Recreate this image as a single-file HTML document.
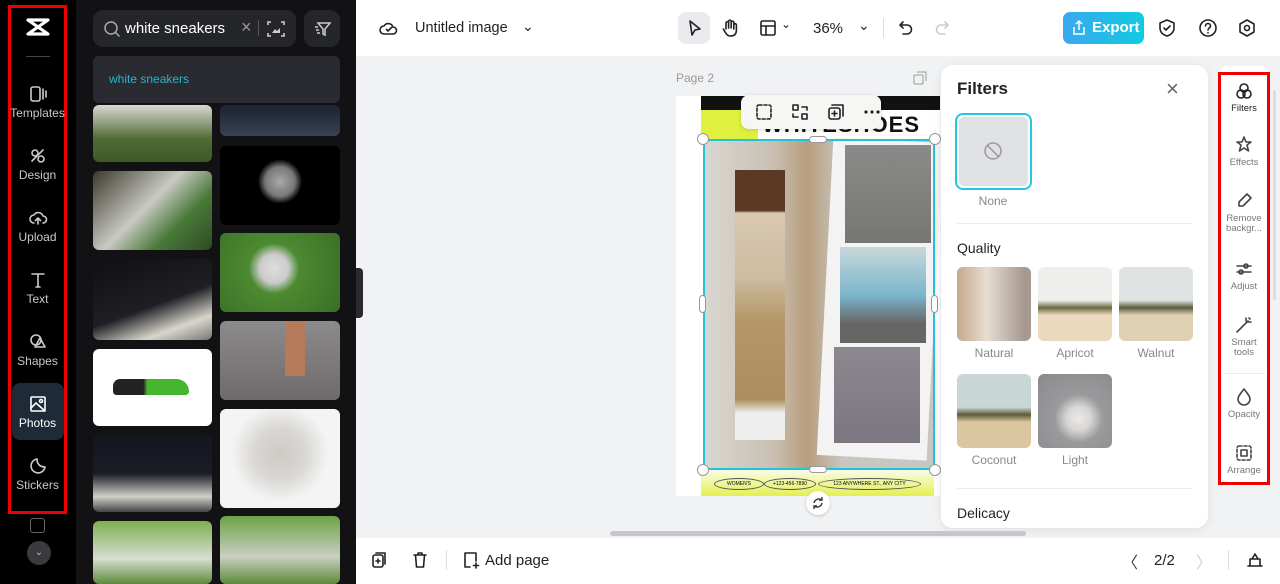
<!DOCTYPE html>
<html><head><meta charset="utf-8"><style>
*{box-sizing:border-box;margin:0;padding:0}
body{width:1280px;height:584px;overflow:hidden;font-family:"Liberation Sans",sans-serif;background:#f1f2f4;position:relative}
.a{position:absolute}
.rail{left:0;top:0;width:76px;height:584px;background:#000}
.ri{position:absolute;left:8px;width:59px;text-align:center;color:#c8c8cc;font-size:12px}
.ri svg{display:block;margin:0 auto 2px}
.panel{left:76px;top:0;width:280px;height:584px;background:#121214}
.ph{position:absolute;border-radius:6px}
.top{left:356px;top:0;width:924px;height:56px;background:#fff}
.bot{left:356px;top:538px;width:924px;height:46px;background:#fff}
.ic{stroke:#222;fill:none;stroke-width:1.6;stroke-linecap:round;stroke-linejoin:round}
.fp{left:941px;top:65px;width:267px;height:463px;background:#fff;border-radius:12px;box-shadow:0 2px 10px rgba(0,0,0,.08)}
.th{position:absolute;width:74px;height:74px;border-radius:6px}
.tl{position:absolute;width:74px;text-align:center;font-size:12px;color:#888}
.rr{left:1218px;top:72px;width:52px;height:413px;background:#fff;border:3px solid #e00}
.rt{position:absolute;left:0;width:46px;text-align:center;font-size:9.5px;color:#777;line-height:10px}
.rt svg{display:block;margin:0 auto 3px}
</style></head><body>
<div class="a rail"></div>
<div class="a" style="left:8px;top:5px;width:59px;height:509px;border:3px solid #e00"></div>
<svg class="a" style="left:25px;top:16px" width="26" height="22" viewBox="0 0 26 22"><path d="M3 4h20L3 18h20z" stroke="#fff" stroke-width="3.2" fill="none" stroke-linejoin="round"/></svg>
<div class="a" style="left:26px;top:56px;width:24px;height:1px;background:#444"></div>
<div class="ri" style="top:84px"><svg width="20" height="20" class="ic" style="stroke:#ccc"><rect x="3" y="3" width="9" height="14" rx="2"/><path d="M15 5v10M18 7v6"/></svg>Templates</div>
<div class="ri" style="top:146px"><svg width="20" height="20" class="ic" style="stroke:#ccc"><circle cx="7" cy="7" r="3"/><circle cx="13" cy="13" r="3"/><path d="M4 15L15 4"/></svg>Design</div>
<div class="ri" style="top:208px"><svg width="20" height="20" class="ic" style="stroke:#ccc"><path d="M6 15a4 4 0 010-8 5 5 0 019 1 3.5 3.5 0 010 7M10 16v-6M7.5 12.5L10 10l2.5 2.5"/></svg>Upload</div>
<div class="ri" style="top:270px"><svg width="20" height="20" class="ic" style="stroke:#ccc"><path d="M4 4h12M10 4v13M8 17h4"/></svg>Text</div>
<div class="ri" style="top:332px"><svg width="20" height="20" class="ic" style="stroke:#ccc"><circle cx="8" cy="8" r="5"/><path d="M12 6l5 9h-10z"/></svg>Shapes</div>
<div class="a" style="left:12px;top:383px;width:52px;height:57px;background:#1f2a38;border-radius:8px"></div>
<div class="ri" style="top:394px;color:#fff"><svg width="20" height="20" class="ic" style="stroke:#fff"><rect x="3" y="3" width="14" height="14" rx="1"/><path d="M3 14l5-5 9 8"/><circle cx="13" cy="7" r="1.5"/></svg>Photos</div>
<div class="ri" style="top:456px"><svg width="20" height="20" class="ic" style="stroke:#ccc"><path d="M17 11A7 7 0 119 3c0 5 3 8 8 8z"/></svg>Stickers</div>
<div class="a" style="left:30px;top:518px;width:15px;height:15px;border:1.5px solid #666;border-radius:3px"></div>
<div class="a" style="left:27px;top:541px;width:24px;height:24px;border-radius:50%;background:#3a3a3e;color:#bbb;font-size:10px;text-align:center;line-height:24px">⌄</div>

<div class="a panel"></div>
<div class="a" style="left:93px;top:10px;width:203px;height:37px;background:#25262a;border-radius:10px"></div>
<svg class="a" style="left:103px;top:20px" width="18" height="18"><circle cx="8" cy="8" r="6" stroke="#aaa" stroke-width="1.5" fill="none"/><path d="M12.5 12.5l4 4" stroke="#aaa" stroke-width="1.5"/></svg>
<div class="a" style="left:125px;top:20px;color:#fff;font-size:15px">white sneakers</div>
<div class="a" style="left:241px;top:17px;color:#999;font-size:18px">×</div>
<div class="a" style="left:258px;top:20px;width:1px;height:16px;background:#555"></div>
<svg class="a" style="left:266px;top:19px" width="20" height="20"><path d="M2 6V3h3M15 3h3v3M18 14v3h-3M5 17H2v-3" stroke="#ccc" stroke-width="1.6" fill="none"/><path d="M6 14l3-4 2 2 3-3v5z" fill="#ccc"/></svg>
<div class="a" style="left:304px;top:10px;width:36px;height:37px;background:#25262a;border-radius:10px"></div>
<svg class="a" style="left:313px;top:19px" width="20" height="20"><path d="M5 4h12l-5 6v6l-2-1v-5z M2 8h3M3 11h3M4 14h3" stroke="#ccc" stroke-width="1.5" fill="none"/></svg>
<div class="a" style="left:93px;top:56px;width:247px;height:47px;background:#2a2b30;border-radius:6px"></div>
<div class="a" style="left:109px;top:72px;color:#1fb8d0;font-size:12px">white sneakers</div>
<div class="ph" style="left:93px;top:105px;width:119px;height:57px;background:linear-gradient(#d8d8d4,#4f6a33 60%,#3d5a28)"></div>
<div class="ph" style="left:93px;top:171px;width:119px;height:79px;background:linear-gradient(135deg,#3b3a2c,#c9c9c4 45%,#4b7a3a 70%,#2f4a24)"></div>
<div class="ph" style="left:93px;top:259px;width:119px;height:81px;background:linear-gradient(160deg,#101012,#1e1f24 55%,#d8d6cc 80%,#777)"></div>
<div class="ph" style="left:93px;top:349px;width:119px;height:77px;background:#fff"><div style="position:absolute;left:20px;top:30px;width:76px;height:16px;background:linear-gradient(90deg,#222 40%,#46b530 45%);border-radius:8px 14px 4px 4px"></div></div>
<div class="ph" style="left:93px;top:435px;width:119px;height:77px;background:linear-gradient(#14161e,#1a1c26 50%,#d0cfc8 80%,#444)"></div>
<div class="ph" style="left:93px;top:521px;width:119px;height:63px;background:linear-gradient(#7fae52,#d7ded0 60%,#5e8a3a)"></div>
<div class="ph" style="left:220px;top:105px;width:120px;height:31px;background:linear-gradient(#1a2233,#3a4350)"></div>
<div class="ph" style="left:220px;top:146px;width:120px;height:79px;background:radial-gradient(circle at 50% 45%,#aaa 0,#777 20%,#000 30%)"></div>
<div class="ph" style="left:220px;top:233px;width:120px;height:79px;background:radial-gradient(circle at 45% 45%,#ddd 0,#ccc 18%,#4c8a30 32%,#3a6e28)"></div>
<div class="ph" style="left:220px;top:321px;width:120px;height:79px;background:linear-gradient(#8c8a8a,#6d6b6c)"><div style="position:absolute;left:65px;top:0;width:20px;height:55px;background:#b47a5a"></div></div>
<div class="ph" style="left:220px;top:409px;width:120px;height:99px;background:radial-gradient(circle at 50% 45%,#cfcac4 0,#d8d6d3 30%,#f4f4f4 60%)"></div>
<div class="ph" style="left:220px;top:516px;width:120px;height:68px;background:linear-gradient(#6ea247,#c9cfc2 60%,#5c8a39)"></div>
<div class="a" style="left:356px;top:268px;width:7px;height:50px;background:#2a2a2e;border-radius:0 4px 4px 0"></div>

<div class="a top"></div>
<svg class="a" style="left:378px;top:18px" width="22" height="20"><path d="M6 16a4 4 0 010-8 5 5 0 019 1 3.5 3.5 0 010 7z M8 11l2 2 4-4" stroke="#222" stroke-width="1.6" fill="none"/></svg>
<div class="a" style="left:415px;top:20px;font-size:14.5px;color:#222">Untitled image</div>
<div class="a" style="left:522px;top:18px;font-size:14px;color:#222">⌄</div>
<div class="a" style="left:678px;top:12px;width:32px;height:32px;background:#e9ebef;border-radius:8px"></div>
<svg class="a" style="left:684px;top:18px" width="20" height="20"><path d="M6 3l10 8-5 1-3 5z" class="ic"/></svg>
<svg class="a" style="left:720px;top:18px" width="20" height="20"><path d="M6 11V5a1.3 1.3 0 012.6 0v5V3.5a1.3 1.3 0 012.6 0V10V4.5a1.3 1.3 0 012.6 0V11V7a1.3 1.3 0 012.6 0v5c0 4-2 6-6 6-3 0-4-2-6-5l-1-2" class="ic"/></svg>
<svg class="a" style="left:758px;top:18px" width="20" height="20"><rect x="3" y="3" width="14" height="14" rx="1.5" class="ic"/><path d="M3 8h14M8 8v9" class="ic"/></svg>
<div class="a" style="left:781px;top:17px;font-size:12px;color:#222">⌄</div>
<div class="a" style="left:813px;top:20px;font-size:15px;color:#222">36%</div>
<div class="a" style="left:858px;top:17px;font-size:14px;color:#222">⌄</div>
<div class="a" style="left:883px;top:18px;width:1px;height:20px;background:#ddd"></div>
<svg class="a" style="left:896px;top:18px" width="20" height="20"><path d="M7 4L4 7l3 3M4 7h7a4.5 4.5 0 010 9H7" class="ic"/></svg>
<svg class="a" style="left:932px;top:18px" width="20" height="20"><path d="M13 4l3 3-3 3M16 7H9a4.5 4.5 0 000 9h4" class="ic" style="stroke:#ccc"/></svg>
<div class="a" style="left:1063px;top:12px;width:81px;height:32px;border-radius:7px;background:linear-gradient(90deg,#3aa8f0,#10cbe0);color:#fff;font-size:15px;font-weight:bold;line-height:32px;padding-left:29px">Export</div>
<svg class="a" style="left:1071px;top:19px" width="16" height="18"><path d="M8 11V2M5 5l3-3 3 3M3 8v7h10V8" stroke="#fff" stroke-width="1.5" fill="none"/></svg>
<svg class="a" style="left:1157px;top:18px" width="20" height="20"><path d="M10 2l7 3v5c0 4-3 7-7 8-4-1-7-4-7-8V5z M7 10l2 2 4-4" class="ic"/></svg>
<svg class="a" style="left:1198px;top:18px" width="20" height="20"><circle cx="10" cy="10" r="8" class="ic"/><path d="M7.5 8a2.5 2.5 0 115 0c0 2-2.5 2-2.5 4M10 14.5v.5" class="ic"/></svg>
<svg class="a" style="left:1237px;top:18px" width="20" height="20"><path d="M10 2l7 4v8l-7 4-7-4V6z" class="ic"/><circle cx="10" cy="10" r="2.5" class="ic"/></svg>

<div class="a" style="left:676px;top:71px;font-size:12px;color:#999">Page 2</div>
<svg class="a" style="left:913px;top:71px" width="14" height="14"><rect x="1" y="4" width="9" height="9" rx="1" stroke="#999" fill="none"/><path d="M4 1h9v9" stroke="#999" fill="none"/></svg>
<div class="a" style="left:676px;top:96px;width:264px;height:400px;background:#fff"></div>
<div class="a" style="left:701px;top:96px;width:239px;height:14px;background:#111"></div>
<div class="a" style="left:701px;top:110px;width:57px;height:30px;background:#dff03e"></div>
<div class="a" style="left:758px;top:110px;width:182px;height:30px;color:#111;font-size:22px;font-weight:bold;line-height:30px;text-align:right;padding-right:20px;letter-spacing:1px">WHITESHOES</div>
<div class="a" style="left:704px;top:140px;width:230px;height:330px;background:linear-gradient(90deg,#d9d7d2,#c9c0b3 30%,#b89e7c 45%,#c8c6c0 60%)"></div>
<div class="a" style="left:735px;top:170px;width:50px;height:270px;background:linear-gradient(#5a3a25 0,#5a3a25 15%,#d8c8b0 16%,#cdbca0 40%,#b59868 55%,#ac8e5e 85%,#eee 90%)"></div>
<div class="a" style="left:825px;top:140px;width:110px;height:318px;background:#f3f3f3;transform:rotate(3deg)"></div>
<div class="a" style="left:845px;top:145px;width:86px;height:98px;background:linear-gradient(#8a8a88,#767674)"></div>
<div class="a" style="left:840px;top:247px;width:86px;height:96px;background:linear-gradient(#c8d8da 0,#7ab6cc 50%,#666 80%)"></div>
<div class="a" style="left:834px;top:347px;width:86px;height:96px;background:linear-gradient(#8d8790,#7c7680)"></div>
<div class="a" style="left:701px;top:470px;width:233px;height:26px;background:linear-gradient(#fafce8,#e4f050)"></div>
<div class="a" style="left:714px;top:478px;width:50px;height:12px;border:1px solid #555;border-radius:50%;font-size:5px;text-align:center;line-height:10px">WOMEN'S</div>
<div class="a" style="left:764px;top:478px;width:52px;height:12px;border:1px solid #555;border-radius:50%;font-size:5px;text-align:center;line-height:10px">+123-456-7890</div>
<div class="a" style="left:818px;top:478px;width:103px;height:12px;border:1px solid #555;border-radius:50%;font-size:5px;text-align:center;line-height:10px">123 ANYWHERE ST., ANY CITY</div>
<div class="a" style="left:703px;top:139px;width:232px;height:331px;border:2px solid #22c2d8"></div>
<div class="a" style="left:697px;top:133px;width:12px;height:12px;border-radius:50%;background:#fff;border:1px solid #999"></div>
<div class="a" style="left:929px;top:133px;width:12px;height:12px;border-radius:50%;background:#fff;border:1px solid #999"></div>
<div class="a" style="left:697px;top:464px;width:12px;height:12px;border-radius:50%;background:#fff;border:1px solid #999"></div>
<div class="a" style="left:929px;top:464px;width:12px;height:12px;border-radius:50%;background:#fff;border:1px solid #999"></div>
<div class="a" style="left:809px;top:136px;width:18px;height:7px;border-radius:4px;background:#fff;border:1px solid #999"></div>
<div class="a" style="left:809px;top:466px;width:18px;height:7px;border-radius:4px;background:#fff;border:1px solid #999"></div>
<div class="a" style="left:699px;top:295px;width:7px;height:18px;border-radius:4px;background:#fff;border:1px solid #999"></div>
<div class="a" style="left:931px;top:295px;width:7px;height:18px;border-radius:4px;background:#fff;border:1px solid #999"></div>
<div class="a" style="left:741px;top:95px;width:140px;height:34px;background:#f6f6f4;border-radius:8px;box-shadow:0 1px 4px rgba(0,0,0,.15)"></div>
<svg class="a" style="left:755px;top:103px" width="18" height="18"><rect x="2" y="2" width="14" height="14" rx="2" class="ic" stroke-dasharray="3 2"/></svg>
<svg class="a" style="left:791px;top:103px" width="18" height="18"><rect x="2" y="2" width="5" height="5" class="ic"/><rect x="11" y="11" width="5" height="5" class="ic"/><path d="M11 4h5v3M7 14H2v-3" class="ic"/></svg>
<svg class="a" style="left:827px;top:103px" width="18" height="18"><rect x="2" y="5" width="11" height="11" rx="2" class="ic"/><path d="M5 2h11v11M7.5 8v5M5 10.5h5" class="ic"/></svg>
<svg class="a" style="left:862px;top:103px" width="20" height="18"><circle cx="4" cy="9" r="1.6" fill="#222"/><circle cx="10" cy="9" r="1.6" fill="#222"/><circle cx="16" cy="9" r="1.6" fill="#222"/></svg>
<div class="a" style="left:806px;top:491px;width:24px;height:24px;border-radius:50%;background:#fff;box-shadow:0 1px 3px rgba(0,0,0,.2)"></div>
<svg class="a" style="left:811px;top:496px" width="14" height="14"><path d="M11 4a5 5 0 00-8 3M3 10a5 5 0 008-3M11 1v3H8M3 13v-3h3" stroke="#333" stroke-width="1.4" fill="none"/></svg>

<div class="a fp"></div>
<div class="a" style="left:957px;top:79px;font-size:17px;font-weight:bold;color:#222">Filters</div>
<div class="a" style="left:1166px;top:76px;font-size:22px;color:#666">×</div>
<div class="a" style="left:955px;top:113px;width:77px;height:77px;border:2px solid #22c8e0;border-radius:8px;padding:2px"><div style="width:100%;height:100%;background:#dfe1e5;border-radius:5px"></div></div>
<svg class="a" style="left:983px;top:141px" width="20" height="20"><circle cx="10" cy="10" r="8" stroke="#999" stroke-width="1.5" fill="none"/><path d="M4.5 4.5l11 11" stroke="#999" stroke-width="1.5"/></svg>
<div class="tl" style="left:956px;top:194px">None</div>
<div class="a" style="left:957px;top:223px;width:235px;height:1px;background:#eee"></div>
<div class="a" style="left:957px;top:240px;font-size:14px;color:#222">Quality</div>
<div class="th" style="left:957px;top:267px;background:linear-gradient(90deg,#c3a98c,#e8ddd2 40%,#a69a90 90%)"></div>
<div class="th" style="left:1038px;top:267px;background:linear-gradient(#eeeeec 45%,#6a6a40 55%,#ead9bd 65%)"></div>
<div class="th" style="left:1119px;top:267px;background:linear-gradient(#dfe3e1 45%,#5a5e3c 55%,#e0d0b4 65%)"></div>
<div class="tl" style="left:957px;top:346px">Natural</div>
<div class="tl" style="left:1038px;top:346px">Apricot</div>
<div class="tl" style="left:1119px;top:346px">Walnut</div>
<div class="th" style="left:957px;top:374px;background:linear-gradient(#c9d6d6 45%,#5a5a38 55%,#dcc6a0 65%)"></div>
<div class="th" style="left:1038px;top:374px;background:radial-gradient(circle at 55% 60%,#eceae8 0,#d8d6d4 20%,#9a9a9c 40%,#8a8a8c)"></div>
<div class="tl" style="left:957px;top:453px">Coconut</div>
<div class="tl" style="left:1038px;top:453px">Light</div>
<div class="a" style="left:957px;top:488px;width:235px;height:1px;background:#eee"></div>
<div class="a" style="left:957px;top:505px;font-size:14px;color:#222">Delicacy</div>

<div class="a" style="left:1218px;top:66px;width:52px;height:420px;background:#fff;border-radius:10px"></div>
<div class="a" style="left:1221px;top:75px;width:46px;height:44px;background:#eceef1"></div>
<div class="a rr">
<div class="rt" style="top:6px;color:#222"><svg width="20" height="20"><circle cx="10" cy="7" r="4" class="ic"/><circle cx="7" cy="13" r="4" class="ic"/><circle cx="13" cy="13" r="4" class="ic"/></svg>Filters</div>
<div class="rt" style="top:60px"><svg width="20" height="20"><path d="M10 2l2 5h5l-4 3 1.5 6L10 13l-4.5 3L7 10 3 7h5z" class="ic" style="stroke:#444"/></svg>Effects</div>
<div class="rt" style="top:116px"><svg width="20" height="20"><path d="M13 3l4 4-8 8H5v-4z" class="ic" style="stroke:#444"/></svg>Remove<br>backgr...</div>
<div class="rt" style="top:184px"><svg width="20" height="20"><path d="M3 7h14M3 13h14" class="ic" style="stroke:#444"/><circle cx="12" cy="7" r="2" fill="#fff" class="ic" style="stroke:#444"/><circle cx="7" cy="13" r="2" fill="#fff" class="ic" style="stroke:#444"/></svg>Adjust</div>
<div class="rt" style="top:240px"><svg width="20" height="20"><path d="M3 17L14 6M12 3v3M15 3l1 1M17 7h-3" class="ic" style="stroke:#444"/></svg>Smart<br>tools</div>
<div class="a" style="left:2px;top:298px;width:42px;height:1px;background:#eee"></div>
<div class="rt" style="top:312px"><svg width="20" height="20"><path d="M10 2c3 4 6 7 6 10a6 6 0 01-12 0c0-3 3-6 6-10z" class="ic" style="stroke:#444"/></svg>Opacity</div>
<div class="rt" style="top:368px"><svg width="20" height="20"><rect x="3" y="3" width="14" height="14" rx="2" class="ic" stroke-dasharray="3 2" style="stroke:#444"/><rect x="7" y="7" width="6" height="6" class="ic" style="stroke:#444"/></svg>Arrange</div>
</div>
<div class="a" style="left:1273px;top:90px;width:3px;height:210px;background:#ddd;border-radius:2px"></div>

<div class="a" style="left:610px;top:531px;width:416px;height:5px;background:#c4c7cb;border-radius:3px"></div>
<div class="a bot"></div>
<svg class="a" style="left:370px;top:550px" width="20" height="20"><rect x="3" y="5" width="10" height="12" rx="2" class="ic"/><path d="M6 3h9v11M8 9v4M6 11h4" class="ic"/></svg>
<svg class="a" style="left:410px;top:550px" width="20" height="20"><path d="M4 5h12M8 5V3h4v2M5.5 5l1 12h7l1-12" class="ic"/></svg>
<div class="a" style="left:446px;top:550px;width:1px;height:20px;background:#ddd"></div>
<svg class="a" style="left:461px;top:550px" width="20" height="20"><path d="M9 17H4V3h11v8M15 13v5M12.5 15.5h5" class="ic"/></svg>
<div class="a" style="left:485px;top:552px;font-size:15px;color:#222">Add page</div>
<div class="a" style="left:1122px;top:549px;font-size:16px;color:#333">〈</div>
<div class="a" style="left:1154px;top:552px;font-size:15px;color:#222">2/2</div>
<div class="a" style="left:1196px;top:549px;font-size:16px;color:#ccc">〉</div>
<div class="a" style="left:1228px;top:550px;width:1px;height:20px;background:#ddd"></div>
<svg class="a" style="left:1245px;top:550px" width="20" height="20"><path d="M3 16h14M5 16V9h10v7M7 9l3-5 3 5" class="ic"/></svg>
</body></html>
